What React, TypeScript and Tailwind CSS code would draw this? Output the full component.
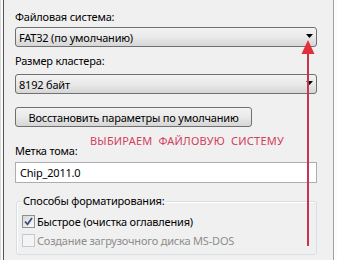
import React from "react";

function Combo({ text }: { text: string }) {
  return (
    <div className="relative w-[302px] h-[20px] rounded-[3px] border border-[#707070] bg-gradient-to-b from-[#f3f3f3] via-[#e9e9e9] to-[#d6d6d6] flex items-center pl-[3px]">
      <span className="leading-none">{text}</span>
      <svg className="absolute right-[3px] top-[6px]" width="7" height="4" viewBox="0 0 7 4">
        <path d="M0 0 H7 L3.5 4 Z" fill="#000" />
      </svg>
    </div>
  );
}

export default function App() {
  return (
    <div className="relative flex w-[337px] h-[260px] bg-[#f0f0f0] overflow-hidden font-['Noto_Sans',sans-serif] text-[11px] tracking-[-0.2px] text-black">
      <div className="w-[1px] h-full bg-[#d8d8d8]" />
      <div className="w-[2px] h-full bg-[#fafafa]" />
      <div className="w-[1px] h-full bg-[#555555]" />

      <div className="flex-1 flex flex-col pl-[11px] pt-[9px]">
        <div className="h-[16px] leading-[16px]">Файловая система:</div>
        <div className="mt-[2px]">
          <Combo text="FAT32 (по умолчанию)" />
        </div>
        <div className="mt-[6px] h-[16px] leading-[16px]">Размер кластера:</div>
        <div className="mt-[5px]">
          <Combo text="8192 байт" />
        </div>
        <div className="mt-[13px] w-[237px] h-[20px] rounded-[3px] border border-[#707070] bg-gradient-to-b from-[#f3f3f3] via-[#e9e9e9] to-[#d6d6d6] flex items-center justify-center leading-none">
          Восстановить параметры по умолчанию
        </div>
        <div className="mt-[16px] h-[16px] leading-[16px]">Метка тома:</div>
        <div className="mt-[3px] w-[302px] h-[21px] border border-[#abadb3] bg-white flex items-center pl-[4px] leading-none">
          Chip_2011.0
        </div>
        <div className="relative mt-[18px] ml-[1px] w-[301px] h-[54px] rounded-[3px] border border-[#d5dfe5] shadow-[inset_1px_1px_0_#ffffff]">
          <div className="absolute left-[4px] top-[-9px] px-[2px] bg-[#f0f0f0] h-[16px] leading-[16px]">
            Способы форматирования:
          </div>
          <div className="flex flex-col pl-[5px] pt-[13px] gap-[6px]">
            <div className="flex items-center gap-[2px] h-[13px]">
              <div className="w-[13px] h-[13px] border border-[#8e8f8f] bg-gradient-to-br from-[#d8d8d8] to-[#fbfbfb] flex items-center justify-center">
                <svg width="9" height="9" viewBox="0 0 9 9">
                  <path d="M1 4.5 L3.5 7.3 L8 1" stroke="#3b4f7d" strokeWidth="1.8" fill="none" />
                </svg>
              </div>
              <span className="leading-none">Быстрое (очистка оглавления)</span>
            </div>
            <div className="flex items-center gap-[2px] h-[13px] text-[#8d8d8d]">
              <div className="w-[13px] h-[13px] border border-[#c8c8c8] bg-[#f4f4f4]" />
              <span className="leading-none">Создание загрузочного диска MS-DOS</span>
            </div>
          </div>
        </div>
      </div>

      <div className="w-[1px] h-full bg-[#a0a0a0]" />
      <div className="w-[3px] h-full bg-[#fcfcfc]" />

      <div className="absolute left-[90px] top-[134px] text-[11px] leading-[14px] text-[#d2405c] whitespace-pre tracking-[0.2px]">
        ВЫБИРАЕМ  ФАЙЛОВУЮ  СИСТЕМУ
      </div>

      <svg className="absolute left-0 top-0 pointer-events-none" width="337" height="260">
        <line x1="308" y1="50" x2="308" y2="246" stroke="#c8344f" strokeWidth="2" />
        <path d="M301.5 54 L308 40 L314.5 54 Z" fill="#e0303c" />
      </svg>
    </div>
  );
}
